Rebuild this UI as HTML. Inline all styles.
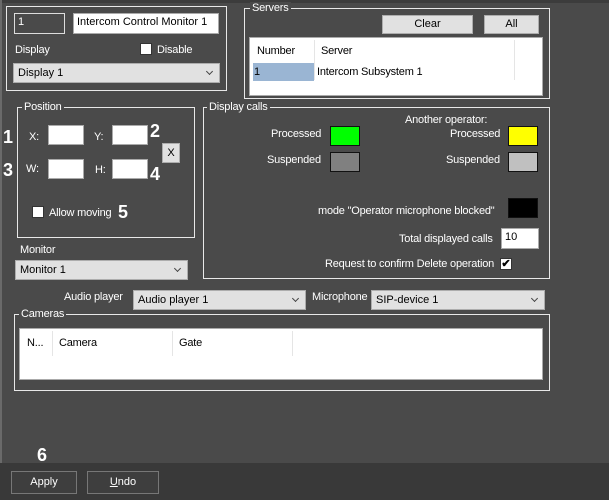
<!DOCTYPE html>
<html><head><meta charset="utf-8"><style>
*{box-sizing:border-box;margin:0;padding:0}
body{width:609px;height:500px;background:#4a4a4a;position:relative;overflow:hidden;font-family:"Liberation Sans",sans-serif;font-size:11px;color:#fff}
.a{position:absolute}
.t{position:absolute;white-space:nowrap;line-height:12px;letter-spacing:-0.2px}
.box{position:absolute;border:1px solid #e8e8e8}
.gt{position:absolute;background:#4a4a4a;padding:0 2px;line-height:12px;white-space:nowrap;letter-spacing:-0.2px}
.in{position:absolute;background:#fff;border:1px solid #aaa;color:#000;padding:2px 3px;line-height:13px}
.sel{position:absolute;background:#e1e1e1;border:1px solid #adadad;color:#000;padding:3px 4px;line-height:12px}
.sel:after{content:"";position:absolute;right:7px;top:5px;width:4px;height:4px;border-right:1px solid #444;border-bottom:1px solid #444;transform:rotate(45deg)}
.btn{position:absolute;background:#e1e1e1;border:1px solid #adadad;color:#000;text-align:center;line-height:16px}
.cb{position:absolute;width:12px;height:12px;background:#fff;border:1px solid #333}
.n{position:absolute;font-weight:bold;font-size:18px;line-height:18px;color:#fff}
.sw{position:absolute;border:1px solid #111}
</style></head><body>
<div class="a" style="left:0;top:0;width:609px;height:3px;background:#3c3c3c"></div>
<div class="a" style="left:0;top:0;width:2px;height:463px;background:#6a6a6a"></div>

<div class="box" style="left:6px;top:6px;width:221px;height:85px"></div>
<div class="in" style="left:14px;top:13px;width:51px;height:21px;background:#4a4a4a;color:#fff;border-color:#ddd">1</div>
<div class="in" style="left:73px;top:13px;width:146px;height:21px">Intercom Control Monitor 1</div>
<div class="t" style="left:15px;top:44px">Display</div>
<div class="cb" style="left:140px;top:43px"></div>
<div class="t" style="left:157px;top:44px">Disable</div>
<div class="sel" style="left:13px;top:63px;width:207px;height:20px">Display 1</div>

<div class="box" style="left:244px;top:8px;width:306px;height:91px"></div>
<div class="gt" style="left:250px;top:2px">Servers</div>
<div class="btn" style="left:382px;top:15px;width:91px;height:19px">Clear</div>
<div class="btn" style="left:484px;top:15px;width:55px;height:19px">All</div>
<div class="a" style="left:249px;top:37px;width:294px;height:59px;background:#fff;border:1px solid #aaa"></div>
<div class="a" style="left:314px;top:40px;width:1px;height:40px;background:#e5e5e5"></div>
<div class="a" style="left:514px;top:40px;width:1px;height:40px;background:#e5e5e5"></div>
<div class="t" style="left:257px;top:45px;color:#000">Number</div>
<div class="t" style="left:321px;top:45px;color:#000">Server</div>
<div class="a" style="left:253px;top:63px;width:61px;height:18px;background:#9ab5d3"></div>
<div class="t" style="left:254px;top:66px;color:#000">1</div>
<div class="t" style="left:317px;top:66px;color:#000">Intercom Subsystem 1</div>

<div class="box" style="left:17px;top:107px;width:178px;height:131px"></div>
<div class="gt" style="left:22px;top:101px">Position</div>
<div class="t" style="left:29px;top:131px">X:</div>
<div class="in" style="left:48px;top:125px;width:36px;height:20px"></div>
<div class="t" style="left:94px;top:131px">Y:</div>
<div class="in" style="left:112px;top:125px;width:36px;height:20px"></div>
<div class="btn" style="left:162px;top:143px;width:18px;height:20px;line-height:18px">X</div>
<div class="t" style="left:26px;top:163px">W:</div>
<div class="in" style="left:48px;top:159px;width:36px;height:20px"></div>
<div class="t" style="left:95px;top:164px">H:</div>
<div class="in" style="left:112px;top:159px;width:36px;height:20px"></div>
<div class="cb" style="left:32px;top:206px"></div>
<div class="t" style="left:49px;top:207px">Allow moving</div>
<div class="n" style="left:3px;top:128px">1</div>
<div class="n" style="left:150px;top:122px">2</div>
<div class="n" style="left:3px;top:161px">3</div>
<div class="n" style="left:150px;top:165px">4</div>
<div class="n" style="left:118px;top:203px">5</div>
<div class="n" style="left:37px;top:446px">6</div>

<div class="t" style="left:20px;top:244px">Monitor</div>
<div class="sel" style="left:15px;top:260px;width:173px;height:20px">Monitor 1</div>

<div class="box" style="left:203px;top:107px;width:347px;height:172px"></div>
<div class="gt" style="left:207px;top:101px">Display calls</div>
<div class="t" style="left:271px;top:128px">Processed</div>
<div class="sw" style="left:330px;top:126px;width:30px;height:20px;background:#00ff00"></div>
<div class="t" style="left:267px;top:154px">Suspended</div>
<div class="sw" style="left:330px;top:152px;width:30px;height:20px;background:#808080"></div>
<div class="t" style="left:405px;top:114px">Another operator:</div>
<div class="t" style="left:450px;top:128px">Processed</div>
<div class="sw" style="left:508px;top:126px;width:30px;height:20px;background:#ffff00"></div>
<div class="t" style="left:446px;top:154px">Suspended</div>
<div class="sw" style="left:508px;top:152px;width:30px;height:20px;background:#c0c0c0"></div>
<div class="t" style="left:318px;top:205px">mode "Operator microphone blocked"</div>
<div class="sw" style="left:508px;top:198px;width:30px;height:20px;background:#000"></div>
<div class="t" style="left:399px;top:233px">Total displayed calls</div>
<div class="in" style="left:501px;top:228px;width:38px;height:21px">10</div>
<div class="t" style="left:325px;top:258px">Request to confirm Delete operation</div>
<div class="cb" style="left:500px;top:258px;color:#000;font-size:11px;line-height:10px;text-align:center;font-weight:bold">✔</div>

<div class="t" style="left:64px;top:291px">Audio player</div>
<div class="sel" style="left:133px;top:290px;width:173px;height:20px">Audio player 1</div>
<div class="t" style="left:312px;top:291px">Microphone</div>
<div class="sel" style="left:371px;top:290px;width:174px;height:20px">SIP-device 1</div>

<div class="box" style="left:14px;top:314px;width:536px;height:77px"></div>
<div class="gt" style="left:19px;top:308px">Cameras</div>
<div class="a" style="left:19px;top:328px;width:524px;height:52px;background:#fff;border:1px solid #aaa"></div>
<div class="a" style="left:52px;top:331px;width:1px;height:25px;background:#e5e5e5"></div>
<div class="a" style="left:172px;top:331px;width:1px;height:25px;background:#e5e5e5"></div>
<div class="a" style="left:292px;top:331px;width:1px;height:25px;background:#e5e5e5"></div>
<div class="t" style="left:27px;top:337px;color:#000">N...</div>
<div class="t" style="left:59px;top:337px;color:#000">Camera</div>
<div class="t" style="left:179px;top:337px;color:#000">Gate</div>

<div class="a" style="left:0;top:463px;width:609px;height:37px;background:#393939"></div>
<div class="btn" style="left:11px;top:471px;width:66px;height:23px;background:#3e3e3e;color:#fff;border-color:#777;line-height:21px">Apply</div>
<div class="btn" style="left:87px;top:471px;width:72px;height:23px;background:#3e3e3e;color:#fff;border-color:#777;line-height:21px"><u>U</u>ndo</div>
</body></html>
